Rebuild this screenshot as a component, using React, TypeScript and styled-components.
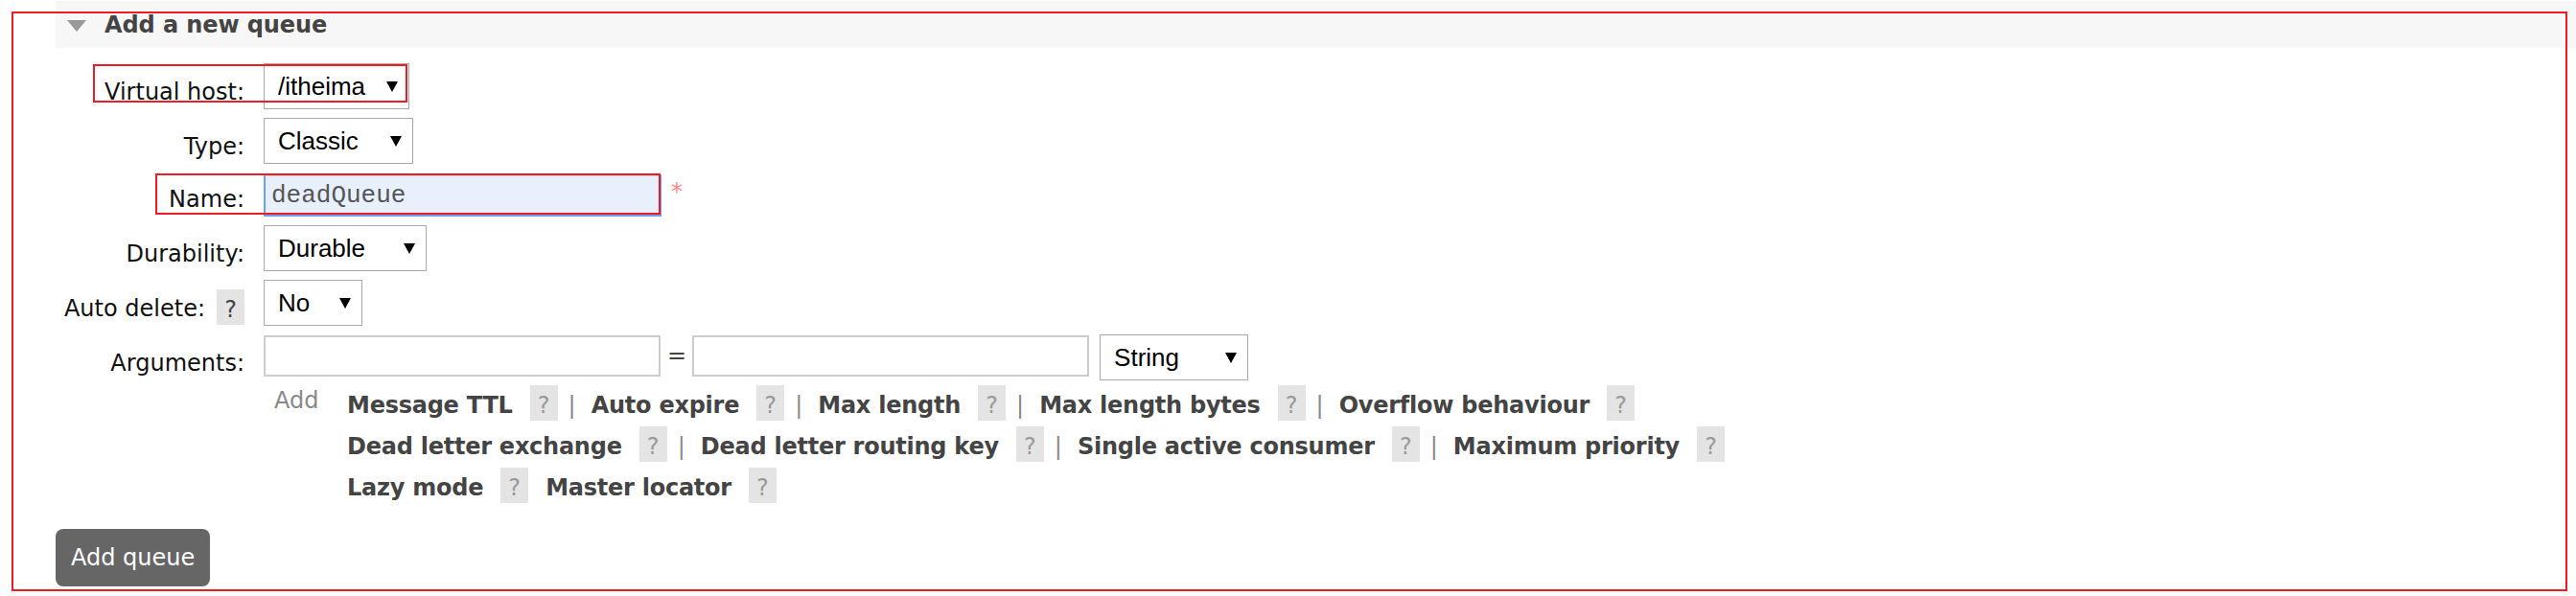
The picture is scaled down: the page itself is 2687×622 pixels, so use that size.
import React from "react";
import styled, { createGlobalStyle } from "styled-components";

const GlobalStyle = createGlobalStyle`
  html, body { margin: 0; padding: 0; background: #fff; }
  body { font-family: "DejaVu Sans", Verdana, sans-serif; }
  * { box-sizing: border-box; }
`;

const Page = styled.div`
  position: relative;
  width: 2687px;
  height: 622px;
  overflow: hidden;
  background: #fff;
  padding-top: 1px;
  font-family: "DejaVu Sans", Verdana, sans-serif;
`;

const Section = styled.section`
  margin-left: 58px;
`;

const SectionHeader = styled.h2`
  margin: 0;
  height: 49px;
  display: flex;
  align-items: center;
  gap: 19px;
  padding-left: 12px;
  background: #f7f7f7;
  font: bold 24px/28px "DejaVu Sans", Verdana, sans-serif;
  letter-spacing: -0.1px;
  color: #444;
`;

const Caret = styled.span`
  width: 0;
  height: 0;
  margin-top: 2px;
  border-left: 10px solid transparent;
  border-right: 10px solid transparent;
  border-top: 12px solid #999;
`;

const Form = styled.div`
  display: flex;
  flex-direction: column;
  gap: 9px;
  margin-top: 16px;
`;

const Row = styled.div<{ $pad?: number; $shift?: number }>`
  display: grid;
  grid-template-columns: 197px 1fr;
  column-gap: 20px;
  padding-top: ${(p) => p.$pad ?? 0}px;
  margin-top: ${(p) => p.$shift ?? 0}px;
`;

const Label = styled.div`
  display: flex;
  justify-content: flex-end;
  align-items: flex-end;
  gap: 12px;
  font-size: 24px;
  line-height: 28px;
  color: #111;
`;

const LabelText = styled.span`
  padding-bottom: 4px;
  white-space: nowrap;
`;

const Control = styled.div`
  display: flex;
  align-items: flex-start;
`;

const SelectWrap = styled.div<{ $w: number; $gapLeft?: number }>`
  position: relative;
  width: ${(p) => p.$w}px;
  height: 48px;
  margin-left: ${(p) => p.$gapLeft ?? 0}px;
  &::after {
    content: "";
    position: absolute;
    right: 12px;
    top: 19px;
    width: 0;
    height: 0;
    border-left: 6px solid transparent;
    border-right: 6px solid transparent;
    border-top: 11px solid #000;
    pointer-events: none;
  }
`;

const Select = styled.select`
  appearance: none;
  -webkit-appearance: none;
  width: 100%;
  height: 100%;
  margin: 0;
  padding: 0 0 0 14px;
  border: 1px solid #a9a9a9;
  border-radius: 0;
  background: #fff;
  font: 26px "Liberation Sans", Arial, sans-serif;
  color: #000;
  outline: none;
`;

const TextInput = styled.input<{ $filled?: boolean }>`
  width: ${(p) => (p.$filled ? 415 : 414)}px;
  height: ${(p) => (p.$filled ? 44 : 43)}px;
  margin: ${(p) => (p.$filled ? 0 : 1)}px 0 0 0;
  padding: 0 6px;
  border: 2px solid #ccc;
  border-color: ${(p) =>
    p.$filled ? "#d0d0d0 #6aa0f6 #6aa0f6 #6aa0f6" : "#ccc"};
  border-radius: 0;
  background: ${(p) => (p.$filled ? "#e8f0fe" : "#fff")};
  font: 26px "Liberation Mono", "Courier New", monospace;
  color: #555;
  outline: none;
`;

const Required = styled.span`
  margin: 4px 0 0 10px;
  font-size: 24px;
  line-height: 28px;
  color: #f88;
`;

const Equals = styled.span`
  margin: 8px 6px 0 7px;
  font-size: 24px;
  line-height: 28px;
  color: #444;
`;

const Help = styled.span<{ $dark?: boolean }>`
  display: inline-flex;
  align-items: center;
  justify-content: center;
  flex: none;
  width: 29px;
  height: 37px;
  padding-top: 4px;
  margin-bottom: ${(p) => (p.$dark ? 1 : 0)}px;
  background: #e4e4e4;
  color: ${(p) => (p.$dark ? "#444" : "#999")};
  font-size: 24px;
  line-height: 28px;
  font-weight: normal;
`;

const AddArea = styled.div`
  display: grid;
  grid-template-columns: 87px 1fr;
`;

const AddLabel = styled.span`
  padding: 2px 0 0 11px;
  font-size: 24px;
  line-height: 28px;
  color: #888;
`;

const LinkRows = styled.div`
  display: flex;
  flex-direction: column;
  gap: 6px;
`;

const LinkRow = styled.div`
  display: flex;
  align-items: flex-end;
  height: 37px;
`;

const ArgLink = styled.span<{ $first?: boolean }>`
  margin-right: 18px;
  margin-left: ${(p) => (p.$first ? 0 : 18)}px;
  padding-bottom: 2px;
  font-weight: bold;
  font-size: 24px;
  line-height: 28px;
  letter-spacing: -0.25px;
  color: #444;
  white-space: nowrap;
`;

const Pipe = styled.span`
  margin: 0 -2px 0 11px;
  padding-bottom: 2px;
  font-size: 24px;
  line-height: 28px;
  color: #888;
`;

const Button = styled.button`
  display: block;
  margin-top: 27px;
  padding: 16px 16px;
  border: none;
  border-radius: 8px;
  background: #666;
  color: #fff;
  font: 24px/28px "DejaVu Sans", Verdana, sans-serif;
`;

const Annotation = styled.div<{ $x: number; $y: number; $w: number; $h: number }>`
  position: absolute;
  left: ${(p) => p.$x}px;
  top: ${(p) => p.$y}px;
  width: ${(p) => p.$w}px;
  height: ${(p) => p.$h}px;
  border: 2px solid #ec1c24;
  pointer-events: none;
`;

type ArgItem = { label: string; sep: boolean };

const argRows: ArgItem[][] = [
  [
    { label: "Message TTL", sep: false },
    { label: "Auto expire", sep: true },
    { label: "Max length", sep: true },
    { label: "Max length bytes", sep: true },
    { label: "Overflow behaviour", sep: true },
  ],
  [
    { label: "Dead letter exchange", sep: false },
    { label: "Dead letter routing key", sep: true },
    { label: "Single active consumer", sep: true },
    { label: "Maximum priority", sep: true },
  ],
  [
    { label: "Lazy mode", sep: false },
    { label: "Master locator", sep: false },
  ],
];

const SelectField = ({
  width,
  value,
  options,
  gapLeft,
}: {
  width: number;
  value: string;
  options: string[];
  gapLeft?: number;
}) => (
  <SelectWrap $w={width} $gapLeft={gapLeft}>
    <Select defaultValue={value}>
      {options.map((o) => (
        <option key={o}>{o}</option>
      ))}
    </Select>
  </SelectWrap>
);

export default function App() {
  return (
    <>
      <GlobalStyle />
      <Page>
        <Section>
          <SectionHeader>
            <Caret />
            Add a new queue
          </SectionHeader>
          <Form>
            <Row>
              <Label>
                <LabelText>Virtual host:</LabelText>
              </Label>
              <Control>
                <SelectField width={152} value="/itheima" options={["/", "/itheima"]} />
              </Control>
            </Row>
            <Row>
              <Label>
                <LabelText>Type:</LabelText>
              </Label>
              <Control>
                <SelectField width={156} value="Classic" options={["Classic", "Quorum"]} />
              </Control>
            </Row>
            <Row $pad={2}>
              <Label>
                <LabelText>Name:</LabelText>
              </Label>
              <Control>
                <TextInput $filled defaultValue="deadQueue" />
                <Required>*</Required>
              </Control>
            </Row>
            <Row>
              <Label>
                <LabelText>Durability:</LabelText>
              </Label>
              <Control>
                <SelectField width={170} value="Durable" options={["Durable", "Transient"]} />
              </Control>
            </Row>
            <Row>
              <Label>
                <LabelText>Auto delete:</LabelText>
                <Help $dark>?</Help>
              </Label>
              <Control>
                <SelectField width={103} value="No" options={["No", "Yes"]} />
              </Control>
            </Row>
            <Row>
              <Label>
                <LabelText>Arguments:</LabelText>
              </Label>
              <Control>
                <TextInput />
                <Equals>=</Equals>
                <TextInput />
                <SelectField
                  width={155}
                  gapLeft={11}
                  value="String"
                  options={["String", "Number", "Boolean", "List"]}
                />
              </Control>
            </Row>
            <Row $shift={-4}>
              <div />
              <AddArea>
                <AddLabel>Add</AddLabel>
                <LinkRows>
                  {argRows.map((row, ri) => (
                    <LinkRow key={ri}>
                      {row.map((item, ii) => (
                        <React.Fragment key={item.label}>
                          {item.sep && <Pipe>|</Pipe>}
                          <ArgLink $first={ii === 0}>{item.label}</ArgLink>
                          <Help>?</Help>
                        </React.Fragment>
                      ))}
                    </LinkRow>
                  ))}
                </LinkRows>
              </AddArea>
            </Row>
          </Form>
          <Button>Add queue</Button>
        </Section>
        <Annotation $x={12} $y={12} $w={2666} $h={605} />
        <Annotation $x={97} $y={67} $w={328} $h={40} />
        <Annotation $x={162} $y={181} $w={527} $h={43} />
      </Page>
    </>
  );
}
